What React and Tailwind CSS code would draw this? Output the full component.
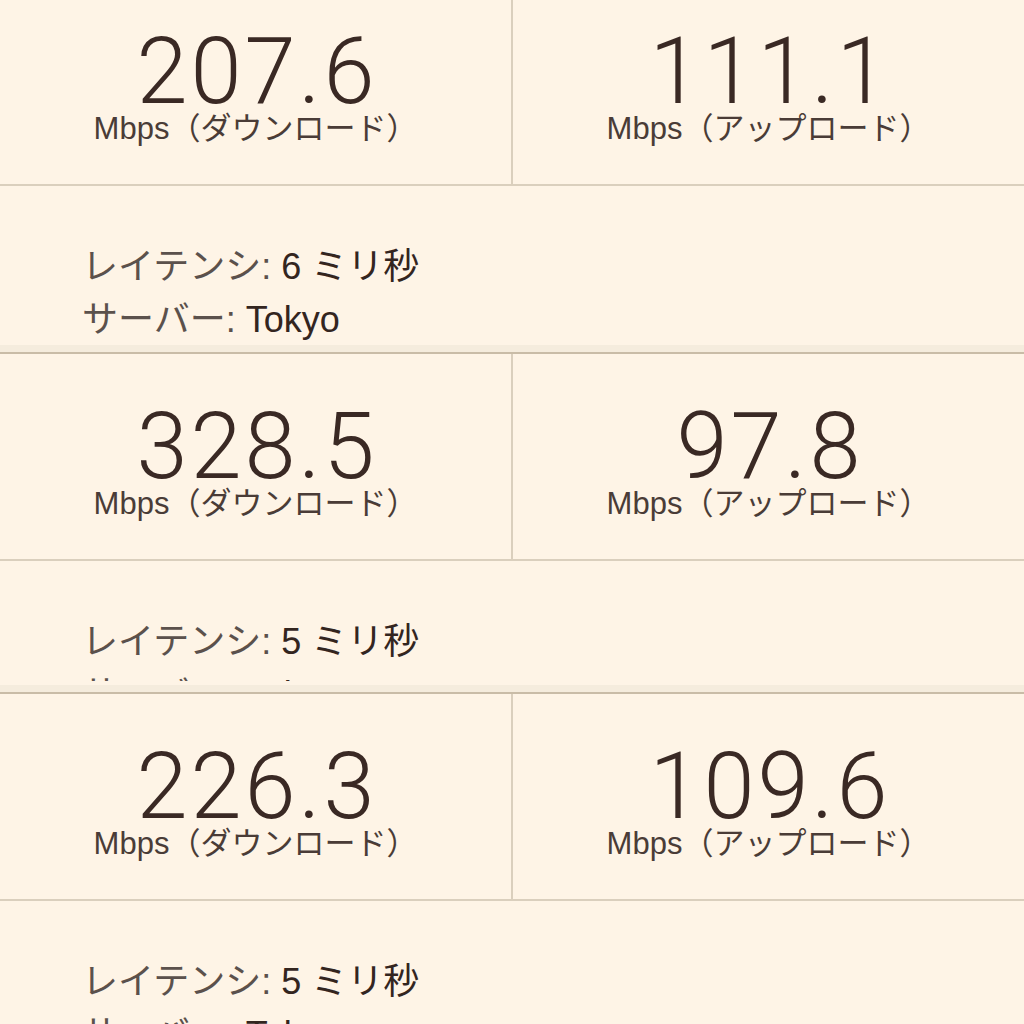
import React from 'react';

const FONT = { fontFamily: "'Liberation Sans', 'Noto Sans CJK JP', sans-serif" };

const results = [
  { down: '207.6', up: '111.1', latency: '6', server: 'Tokyo', bottom: 'h-[159px]' },
  { down: '328.5', up: '97.8', latency: '5', server: 'Tokyo', bottom: 'h-[120px] mb-[4px]' },
  { down: '226.3', up: '109.6', latency: '5', server: 'Tokyo', bottom: 'h-[200px]' },
];

const Speed = ({ value, label }) => (
  <div className="flex-1 flex flex-col items-center pt-[54px]">
    <div className="font-['Roboto'] font-light text-[92px] leading-[78px] tracking-[3px] pl-[3px] text-[#3a2924]">{value}</div>
    <div className="text-[31px] leading-[36px] text-[#4a3c37] [text-spacing-trim:space-all]">Mbps（{label}）</div>
  </div>
);

const ResultCard = ({ r, last }) => (
  <div>
    <div className="flex h-[207px] border-b-2 border-[#dacfbd]">
      <Speed value={r.down} label="ダウンロード" />
      <div className="w-[2px] bg-[#dacfbd]" />
      <Speed value={r.up} label="アップロード" />
    </div>
    <div className={`${r.bottom} overflow-hidden pl-[82px] pt-[54px] text-[36px] leading-[53px]`}>
      <div>
        <span className="text-[#5b514c]">レイテンシ:</span>{' '}
        <span className="text-[#33251f]">{r.latency} ミリ秒</span>
      </div>
      <div>
        <span className="text-[#5b514c]">サーバー:</span>{' '}
        <span className="text-[#33251f]">{r.server}</span>
      </div>
    </div>
    {!last && (
      <>
        <div className="h-[7px] bg-[#f5ecdd]" />
        <div className="h-[2px] bg-[#c9bca7]" />
      </>
    )}
  </div>
);

export default function App() {
  return (
    <div className="h-[1024px] w-[1024px] overflow-hidden bg-[#fef4e6]" style={FONT}>
      <div className="-mt-[21px]">
        {results.map((r, i) => (
          <ResultCard key={i} r={r} last={i === results.length - 1} />
        ))}
      </div>
    </div>
  );
}
